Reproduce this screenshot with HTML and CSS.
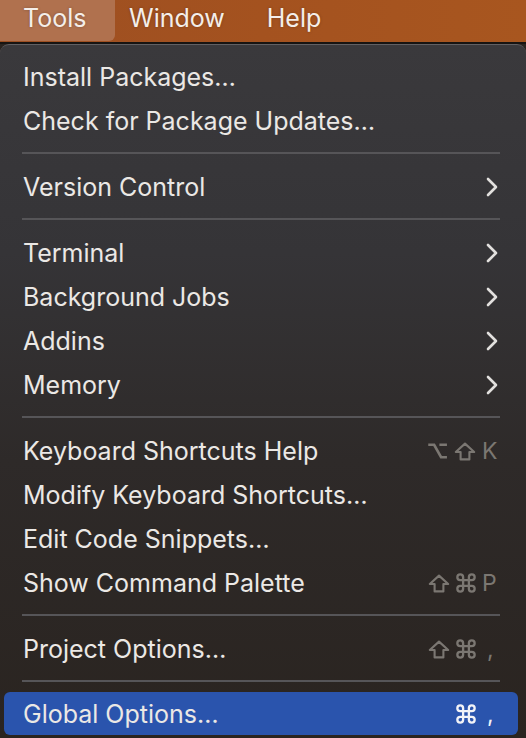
FILE: index.html
```html
<!DOCTYPE html>
<html lang="en">
<head>
<meta charset="utf-8">
<title>Tools menu</title>
<link rel="stylesheet" href="styles.css">
</head>
<body>
<div class="menubar">
  <div class="mb-item mb-active">Tools</div>
  <div class="mb-item mb-window">Window</div>
  <div class="mb-item">Help</div>
</div>
<div class="panel">
  <div class="item"><span class="label">Install Packages…</span></div>
  <div class="item"><span class="label">Check for Package Updates…</span></div>
  <div class="sep"></div>
  <div class="item"><span class="label">Version Control</span><svg class="chev" viewBox="0 0 12 20"><path d="M2 2 L10 10 L2 18"/></svg></div>
  <div class="sep"></div>
  <div class="item"><span class="label">Terminal</span><svg class="chev" viewBox="0 0 12 20"><path d="M2 2 L10 10 L2 18"/></svg></div>
  <div class="item"><span class="label">Background Jobs</span><svg class="chev" viewBox="0 0 12 20"><path d="M2 2 L10 10 L2 18"/></svg></div>
  <div class="item"><span class="label">Addins</span><svg class="chev" viewBox="0 0 12 20"><path d="M2 2 L10 10 L2 18"/></svg></div>
  <div class="item"><span class="label">Memory</span><svg class="chev" viewBox="0 0 12 20"><path d="M2 2 L10 10 L2 18"/></svg></div>
  <div class="sep"></div>
  <div class="item"><span class="label">Keyboard Shortcuts Help</span><span class="sc"><span class="mods"><svg class="m-opt" viewBox="0 0 20 17"><path d="M1.2 2.6 H6.8 L13.4 14.4 H19 M11.8 2.6 H19"/></svg><svg class="m-shift" viewBox="0 0 22 19"><path d="M11 1.6 L20.2 10 H15.4 V17.4 H6.6 V10 H1.8 Z"/></svg></span><span class="key">K</span></span></div>
  <div class="item"><span class="label">Modify Keyboard Shortcuts…</span></div>
  <div class="item"><span class="label">Edit Code Snippets…</span></div>
  <div class="item"><span class="label">Show Command Palette</span><span class="sc"><span class="mods"><svg class="m-shift" viewBox="0 0 22 19"><path d="M11 1.6 L20.2 10 H15.4 V17.4 H6.6 V10 H1.8 Z"/></svg><svg class="m-cmd" viewBox="1.6 1.6 20.8 20.8"><path d="M15 6v12a3 3 0 1 0 3-3H6a3 3 0 1 0 3 3V6a3 3 0 1 0-3 3h12a3 3 0 1 0-3-3"/></svg></span><span class="key">P</span></span></div>
  <div class="sep"></div>
  <div class="item"><span class="label">Project Options…</span><span class="sc"><span class="mods"><svg class="m-shift" viewBox="0 0 22 19"><path d="M11 1.6 L20.2 10 H15.4 V17.4 H6.6 V10 H1.8 Z"/></svg><svg class="m-cmd" viewBox="1.6 1.6 20.8 20.8"><path d="M15 6v12a3 3 0 1 0 3-3H6a3 3 0 1 0 3 3V6a3 3 0 1 0-3 3h12a3 3 0 1 0-3-3"/></svg></span><span class="key comma">,</span></span></div>
  <div class="sep"></div>
  <div class="item selected"><span class="label">Global Options…</span><span class="sc"><span class="mods"><svg class="m-cmd" viewBox="1.6 1.6 20.8 20.8"><path d="M15 6v12a3 3 0 1 0 3-3H6a3 3 0 1 0 3 3V6a3 3 0 1 0-3 3h12a3 3 0 1 0-3-3"/></svg></span><span class="key comma">,</span></span></div>
</div>
</body>
</html>
```
FILE: styles.css
```css
html, body {
  margin: 0;
  padding: 0;
}
body {
  width: 526px;
  height: 738px;
  overflow: hidden;
  background: #2a2420;
  font-family: "Inter", "Liberation Sans", sans-serif;
  color: #ebe8e5;
}
.menubar {
  height: 42px;
  display: flex;
  align-items: stretch;
  background: linear-gradient(90deg, #9d4f22 0%, #a4521f 50%, #a8561f 100%);
  border-bottom: 2px solid #171412;
  font-size: 25px;
  color: #f4eee9;
}
.mb-item {
  display: flex;
  align-items: center;
  padding: 0 20px 6px 22px;
  text-shadow: 0 0 3px rgba(0,0,0,0.25);
}
.mb-active {
  padding-left: 23px;
  box-sizing: border-box;
  width: 115px;
  height: 41px;
  background: #b0714e;
  border-bottom-right-radius: 6px;
}
.mb-window {
  padding-left: 14px;
}
.panel {
  height: 693px;
  border-top: 1px solid #626063;
  border-radius: 9px 9px 0 0;
  background: linear-gradient(180deg, #3a393c 0%, #353437 30%, #2e2a29 60%, #2a2420 100%);
  padding-top: 10px;
  box-sizing: border-box;
}
.item {
  height: 44px;
  display: flex;
  align-items: center;
  justify-content: space-between;
  margin: 0 8px 0 4px;
  padding: 0 21px 0 19px;
  font-size: 25px;
  border-radius: 6px;
}
.item.selected {
  background: #2a54ad;
  height: 43px;
  margin-top: -1px;
  padding-top: 1px;
  box-sizing: border-box;
}
.sep {
  height: 2px;
  margin: 9px 26px 11px 22px;
  background: #565558;
}
.chev {
  width: 12px;
  height: 20px;
  margin-right: -1px;
}
.chev path {
  fill: none;
  stroke: #e2e0de;
  stroke-width: 2.6;
  stroke-linecap: round;
  stroke-linejoin: round;
}
.sc {
  display: flex;
  align-items: center;
  color: #7b7772;
  font-size: 23px;
}
.mods {
  display: flex;
  align-items: center;
  gap: 6px;
}
.mods svg path {
  fill: none;
  stroke: currentColor;
}
.m-opt {
  width: 21px;
  height: 18px;
}
.m-opt path {
  stroke-width: 2.5;
}
.m-shift {
  width: 22px;
  height: 19px;
}
.m-shift path {
  stroke-width: 2.1;
  stroke-linejoin: round;
}
.m-cmd {
  width: 20px;
  height: 20px;
}
.m-cmd path {
  stroke-width: 2.4;
}
.key {
  width: 15px;
  margin-left: 6px;
  line-height: 1;
}
.key.comma {
  padding-left: 5px;
  width: 10px;
}
.selected .sc {
  color: #f2f3f7;
}
```
